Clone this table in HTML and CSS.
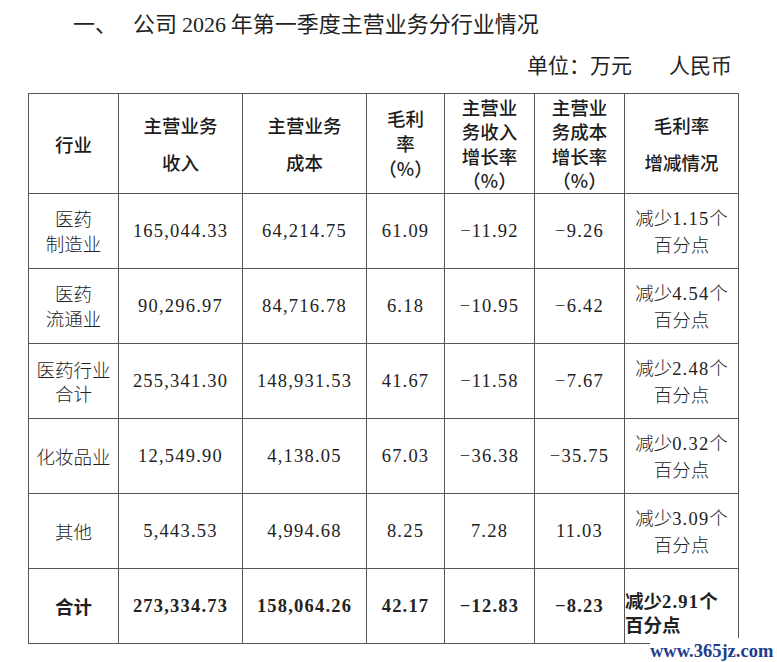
FILE: index.html
```html
<!DOCTYPE html>
<html lang="zh-CN">
<head>
<meta charset="utf-8">
<title>公司2026年第一季度主营业务分行业情况</title>
<link rel="stylesheet" href="styles.css">
</head>
<body>
<h1 class="title"><span class="title-num">一、</span>公司 <span class="latin">2026</span> 年第一季度主营业务分行业情况</h1>
<p class="unit">单位：万元<span class="gap"></span>人民币</p>
<table class="report">
  <colgroup>
    <col class="c1"><col class="c2"><col class="c3"><col class="c4"><col class="c5"><col class="c6"><col class="c7">
  </colgroup>
  <thead>
    <tr class="head">
      <th class="h1">行业</th>
      <th class="h2">主营业务<br>收入</th>
      <th class="h2">主营业务<br>成本</th>
      <th class="h3">毛利<br>率<br>（%）</th>
      <th class="h4">主营业<br>务收入<br>增长率<br>（%）</th>
      <th class="h4">主营业<br>务成本<br>增长率<br>（%）</th>
      <th class="h2">毛利率<br>增减情况</th>
    </tr>
  </thead>
  <tbody>
    <tr>
      <td class="name">医药<br>制造业</td>
      <td class="n">165,044.33</td>
      <td class="n">64,214.75</td>
      <td class="n">61.09</td>
      <td class="n">−11.92</td>
      <td class="n">−9.26</td>
      <td class="chg">减少<span class="num">1.15</span>个<br>百分点</td>
    </tr>
    <tr>
      <td class="name">医药<br>流通业</td>
      <td class="n">90,296.97</td>
      <td class="n">84,716.78</td>
      <td class="n">6.18</td>
      <td class="n">−10.95</td>
      <td class="n">−6.42</td>
      <td class="chg">减少<span class="num">4.54</span>个<br>百分点</td>
    </tr>
    <tr>
      <td class="name tight">医药行业<br>合计</td>
      <td class="n">255,341.30</td>
      <td class="n">148,931.53</td>
      <td class="n">41.67</td>
      <td class="n">−11.58</td>
      <td class="n">−7.67</td>
      <td class="chg">减少<span class="num">2.48</span>个<br>百分点</td>
    </tr>
    <tr>
      <td class="name">化妆品业</td>
      <td class="n">12,549.90</td>
      <td class="n">4,138.05</td>
      <td class="n">67.03</td>
      <td class="n">−36.38</td>
      <td class="n">−35.75</td>
      <td class="chg">减少<span class="num">0.32</span>个<br>百分点</td>
    </tr>
    <tr>
      <td class="name">其他</td>
      <td class="n">5,443.53</td>
      <td class="n">4,994.68</td>
      <td class="n">8.25</td>
      <td class="n">7.28</td>
      <td class="n">11.03</td>
      <td class="chg">减少<span class="num">3.09</span>个<br>百分点</td>
    </tr>
    <tr class="total">
      <td class="name">合计</td>
      <td class="n">273,334.73</td>
      <td class="n">158,064.26</td>
      <td class="n">42.17</td>
      <td class="n">−12.83</td>
      <td class="n">−8.23</td>
      <td class="chg-total">减少<span class="num">2.91</span>个<br>百分点</td>
    </tr>
  </tbody>
</table>
<div class="watermark">www.365jz.com</div>
</body>
</html>
```
FILE: styles.css
```css
html, body {
  margin: 0;
  padding: 0;
  background: #ffffff;
}
body {
  position: relative;
  height: 662px;
  overflow: hidden;
  font-family: "Noto Sans CJK SC", "Liberation Serif", sans-serif;
  color: #222222;
}
.title {
  margin: 0;
  padding: 8px 0 0 73px;
  font-size: 22px;
  line-height: 28px;
  font-weight: 400;
  white-space: nowrap;
}
.title-num {
  display: inline-block;
  width: 60px;
}
.latin {
  font-family: "Liberation Serif", serif;
}
.unit {
  margin: 11px 0 0 0;
  padding-right: 45px;
  text-align: right;
  font-size: 21px;
  line-height: 28px;
  font-weight: 400;
}
.gap {
  display: inline-block;
  width: 37px;
}
.report {
  margin: 15px 0 0 28px;
  border-collapse: collapse;
  table-layout: fixed;
  width: 710px;
  font-size: 18.5px;
}
.c1 { width: 90px; }
.c2 { width: 124px; }
.c3 { width: 124px; }
.c4 { width: 78px; }
.c5 { width: 90px; }
.c6 { width: 90px; }
.c7 { width: 114px; }
.report th,
.report td {
  border: 1px solid #555555;
  padding: 0;
  text-align: center;
  vertical-align: middle;
}
.head {
  height: 100px;
}
.report th {
  font-weight: 500;
  color: #1c1c1c;
}
.h1 { line-height: 26px; padding-top: 2px; }
.h2 { line-height: 37px; padding-top: 15px; }
.h3 { line-height: 25px; }
.h4 { line-height: 24.5px; padding-top: 2px; }
.report tbody tr {
  height: 75px;
}
.report td {
  font-weight: 300;
  line-height: 25px;
}
.report td.tight {
  line-height: 24px;
}
.n,
.num {
  font-family: "Liberation Serif", serif;
  letter-spacing: 1.2px;
}
.chg {
  padding-right: 10px;
  line-height: 24px;
}
.total td {
  font-weight: 700;
}
.report td.chg-total {
  text-align: left;
  line-height: 22px;
  padding-top: 11px;
}
.watermark {
  position: absolute;
  right: 0;
  bottom: 0;
  width: 122px;
  height: 24px;
  padding-right: 5px;
  background: #ffffff;
  text-align: right;
  font-family: "Liberation Serif", serif;
  font-weight: 700;
  font-size: 18.5px;
  line-height: 26px;
  color: #213d8c;
}
```
